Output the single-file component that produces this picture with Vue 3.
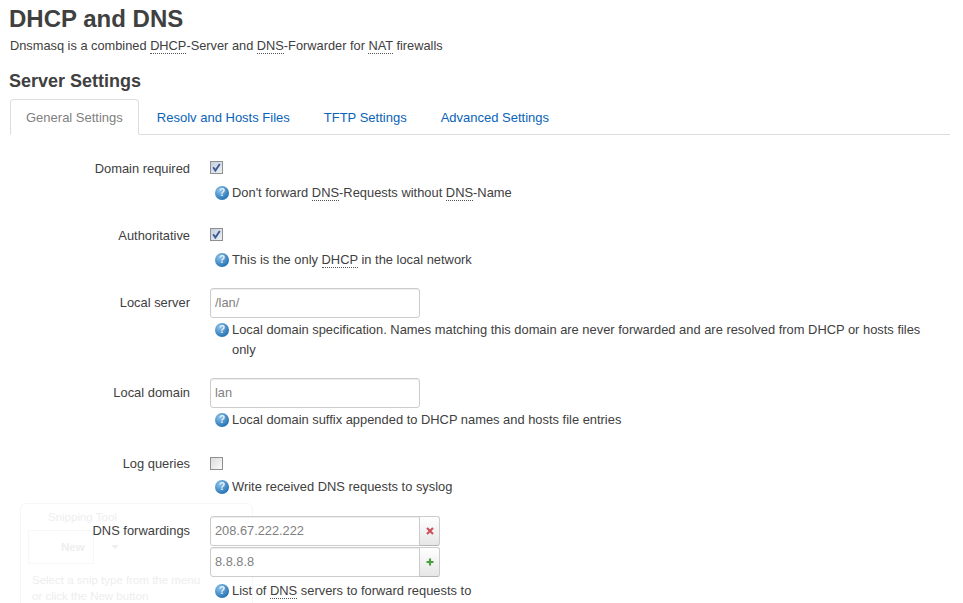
<script setup>
const tabs = ['Resolv and Hosts Files', 'TFTP Settings', 'Advanced Settings']
</script>

<template>
  <div class="page">
    <h2 class="title">DHCP and DNS</h2>
    <p class="intro">Dnsmasq is a combined <abbr>DHCP</abbr>-Server and <abbr>DNS</abbr>-Forwarder for <abbr>NAT</abbr> firewalls</p>
    <h3 class="section">Server Settings</h3>
    <ul class="tabs">
      <li class="tab active">General Settings</li>
      <li v-for="t in tabs" :key="t" class="tab">{{ t }}</li>
    </ul>

    <div class="form">
      <div class="row">
        <label class="label">Domain required</label>
        <div class="value">
          <div class="control"><span class="check on"><svg viewBox="0 0 13 13" width="13" height="13"><path d="M3.2 6.3 5.4 9.6 9.8 3" fill="none" stroke="#3c5a94" stroke-width="1.9"/></svg></span></div>
          <div class="help"><span class="q">?</span><span>Don't forward <abbr>DNS</abbr>-Requests without <abbr>DNS</abbr>-Name</span></div>
        </div>
      </div>
      <div class="row">
        <label class="label">Authoritative</label>
        <div class="value">
          <div class="control"><span class="check on"><svg viewBox="0 0 13 13" width="13" height="13"><path d="M3.2 6.3 5.4 9.6 9.8 3" fill="none" stroke="#3c5a94" stroke-width="1.9"/></svg></span></div>
          <div class="help"><span class="q">?</span><span>This is the only <abbr>DHCP</abbr> in the local network</span></div>
        </div>
      </div>
      <div class="row">
        <label class="label">Local server</label>
        <div class="value">
          <div class="input-line"><input class="input" value="/lan/" /></div>
          <div class="help"><span class="q">?</span><span>Local domain specification. Names matching this domain are never forwarded and are resolved from DHCP or hosts files only</span></div>
        </div>
      </div>
      <div class="row">
        <label class="label">Local domain</label>
        <div class="value">
          <div class="input-line"><input class="input" value="lan" /></div>
          <div class="help"><span class="q">?</span><span>Local domain suffix appended to DHCP names and hosts file entries</span></div>
        </div>
      </div>
      <div class="row log">
        <label class="label">Log queries</label>
        <div class="value">
          <div class="control"><span class="check"></span></div>
          <div class="help"><span class="q">?</span><span>Write received DNS requests to syslog</span></div>
        </div>
      </div>
      <div class="row dns">
        <label class="label">DNS forwardings</label>
        <div class="value">
          <div class="group">
            <input class="input joined" value="208.67.222.222" />
            <button class="addon" type="button" aria-label="Remove"><svg viewBox="0 0 8 8" width="8" height="8"><path d="M1 1 7 7M7 1 1 7" stroke="#cf4d57" stroke-width="2.1" fill="none"/></svg></button>
          </div>
          <div class="group">
            <input class="input joined" value="8.8.8.8" />
            <button class="addon" type="button" aria-label="Add"><svg viewBox="0 0 8 8" width="8" height="8"><path d="M4 0.5V7.5M0.5 4H7.5" stroke="#45a03c" stroke-width="2.1" fill="none"/></svg></button>
          </div>
          <div class="help last"><span class="q">?</span><span>List of <abbr>DNS</abbr> servers to forward requests to</span></div>
        </div>
      </div>
    </div>

    <div class="ghost" aria-hidden="true">
      <div class="ghost-title">Snipping Tool</div>
      <div class="ghost-bar"><span class="ghost-new">New</span><span class="ghost-arrow"></span></div>
      <div class="ghost-text">Select a snip type from the menu</div>
      <div class="ghost-text">or click the New button</div>
    </div>
  </div>
</template>

<style scoped>
.page {
  position: relative;
  width: 963px;
  height: 603px;
  overflow: hidden;
  box-sizing: border-box;
  padding: 0 13px 0 10px;
  background: #fff;
  color: #404040;
  font-family: "Liberation Sans", Arial, sans-serif;
  font-size: 12.9px;
  line-height: 20px;
}
.title {
  margin: 0 0 0 -1px;
  padding-top: 4px;
  font-size: 24px;
  line-height: 30px;
  font-weight: 700;
}
.intro {
  margin: 0;
  padding-top: 2px;
  height: 20px;
  font-size: 12.8px;
}
.section {
  margin: 0 0 0 -1px;
  padding-top: 14px;
  font-size: 18px;
  line-height: 22px;
  font-weight: 700;
}
abbr {
  border-bottom: 1px dotted #555;
  text-decoration: none;
}
.tabs {
  display: flex;
  list-style: none;
  margin: 7px 0 0;
  padding: 0;
  height: 36px;
  box-sizing: border-box;
  border-bottom: 1px solid #ddd;
  font-size: 13px;
}
.tab {
  padding: 8px 15px 0;
  margin-right: 2px;
  height: 36px;
  box-sizing: border-box;
  color: #0a63b8;
  border: 1px solid transparent;
}
.tab.active {
  color: #808080;
  background: #fff;
  border-color: #ddd #ddd #fff;
  border-radius: 4px 4px 0 0;
}
.form {
  position: relative;
  z-index: 1;
  margin-top: 19px;
}
.row {
  display: flex;
  margin-bottom: 18px;
}
.row.log {
  margin-top: 19px;
}
.row.dns {
  margin-top: 19px;
}
.label {
  width: 180px;
  flex: none;
  box-sizing: border-box;
  text-align: right;
  padding-top: 5px;
}
.value {
  margin-left: 20px;
  flex: 1;
  max-width: 720px;
}
.control {
  height: 29px;
  padding-top: 7px;
  box-sizing: border-box;
}
.log .control {
  height: 28px;
  padding-top: 8px;
}
.check {
  display: block;
  width: 13px;
  height: 13px;
  box-sizing: border-box;
  border: 1px solid #8e8f8f;
  background: linear-gradient(135deg, #dcdcdc, #fafafa);
}
.check.on {
  background: linear-gradient(135deg, #c3cfdc, #eef1f5);
}
.check svg {
  display: block;
  margin: -1px;
}
.input-line {
  height: 32px;
}
.input {
  display: block;
  width: 210px;
  height: 30px;
  box-sizing: border-box;
  border: 1px solid #ccc;
  border-radius: 3px;
  padding: 0 4px 2px;
  color: #808080;
  font: 12.8px "Liberation Sans", Arial, sans-serif;
  box-shadow: inset 0 1px 1px rgba(0,0,0,.075);
  background: #fff;
  outline: none;
}
.group {
  display: flex;
  height: 30px;
  margin-bottom: 1px;
}
.joined {
  border-radius: 3px 0 0 3px;
}
.addon {
  display: flex;
  align-items: center;
  justify-content: center;
  width: 21px;
  height: 30px;
  margin-left: -1px;
  padding: 0;
  border: 1px solid #ccc;
  border-bottom-color: #b3b3b3;
  border-radius: 0 3px 3px 0;
  background: linear-gradient(#fff, #e6e6e6);
}
.help {
  display: flex;
  padding-left: 5px;
}
.help.last {
  padding-top: 3px;
}
.q {
  flex: none;
  width: 14px;
  height: 14px;
  margin: 3px 3px 0 0;
  border-radius: 50%;
  background: radial-gradient(circle at 35% 30%, #8fc4ea, #2b78b8 70%, #1d5c94);
  color: #e9f4fc;
  font-size: 10px;
  font-weight: 700;
  line-height: 14px;
  text-align: center;
}
.ghost {
  position: absolute;
  left: 20px;
  top: 503px;
  width: 233px;
  height: 110px;
  border: 1px solid #f6f6f6;
  border-radius: 6px;
  color: #eeeeee;
  box-sizing: border-box;
  padding: 6px 10px;
  font-size: 11.5px;
  line-height: 14px;
  pointer-events: none;
}
.ghost-title { padding-left: 17px; }
.ghost-bar {
  display: flex;
  align-items: center;
  gap: 26px;
  width: 66px;
  border: 1px solid #f7f7f7;
  margin: 6px 0 10px -3px;
  padding-left: 32px;
  height: 34px;
  box-sizing: border-box;
}
.ghost-new { font-weight: 700; }
.ghost-arrow {
  flex: none;
  width: 0;
  height: 0;
  border: 4px solid transparent;
  border-top-color: #eeeeee;
  border-bottom: 0;
}
.ghost-text {
  line-height: 12px;
  margin-bottom: 4px;
  padding-left: 1px;
}
</style>
